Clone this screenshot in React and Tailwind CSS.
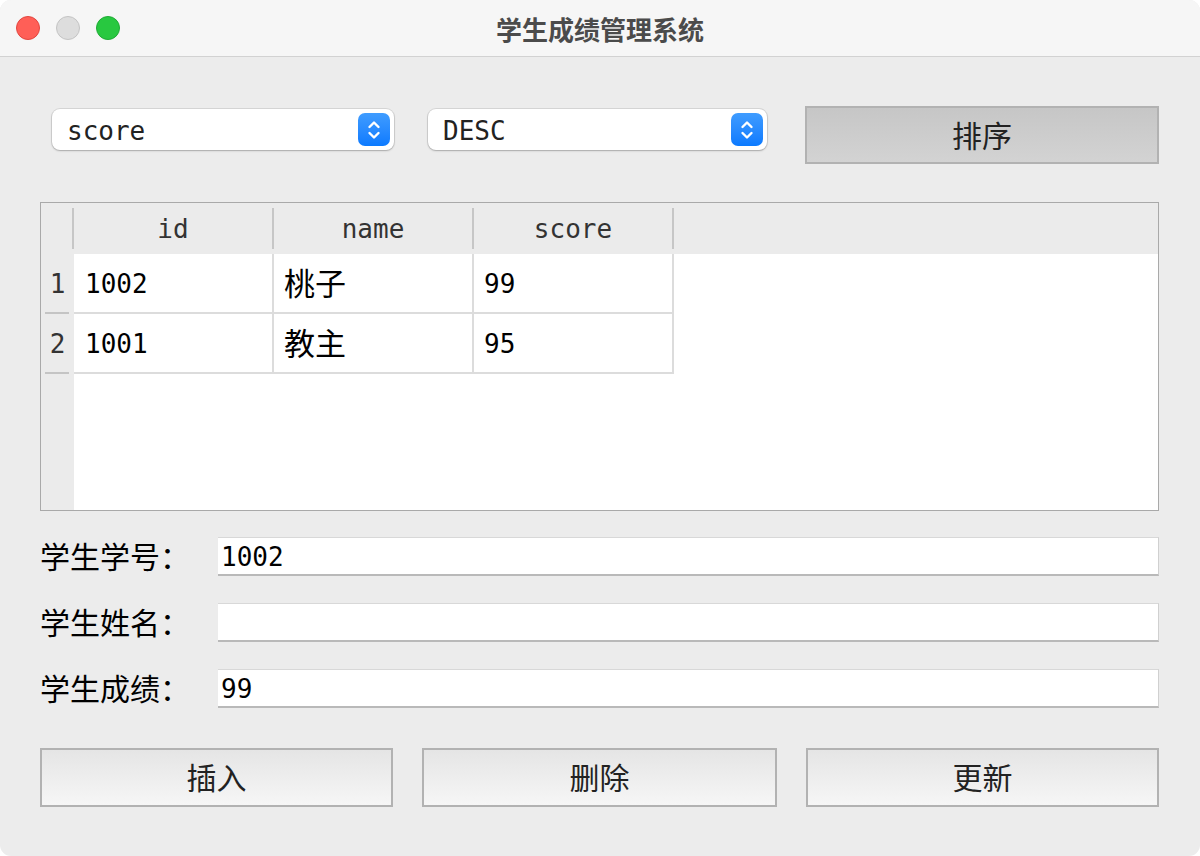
import React from "react";

const mono = { fontFamily: '"DejaVu Sans Mono", "Noto Sans CJK SC", monospace' };
const cjk = { fontFamily: '"Noto Sans CJK SC", "Noto Sans", sans-serif' };

function Stepper() {
  return (
    <div className="w-[32px] h-[33px] rounded-[7px] bg-gradient-to-b from-[#3f9cff] to-[#0a7aff] flex items-center justify-center">
      <svg width="16" height="24" viewBox="0 0 16 24" fill="none" stroke="white" strokeWidth="2.4" strokeLinecap="round" strokeLinejoin="round">
        <path d="M3.5 9 L8 4.5 L12.5 9" />
        <path d="M3.5 15 L8 19.5 L12.5 15" />
      </svg>
    </div>
  );
}

function Select({ value, width }) {
  return (
    <div
      className={`${width} h-[41px] bg-white rounded-[8px] shadow-[0_0_0_1px_rgba(0,0,0,0.09),0_1px_2px_rgba(0,0,0,0.22)] flex items-center justify-between pl-[15px] pr-[4px]`}
    >
      <span className="text-[26px] text-[#222] leading-none pt-[2px]" style={mono}>{value}</span>
      <Stepper />
    </div>
  );
}

function Btn({ label, width }) {
  return (
    <div
      className={`${width} h-[59px] border-2 border-[#b2b2b2] flex items-center justify-center text-[30px] text-[#222] bg-gradient-to-b from-[#e5e5e5] to-[#f6f6f6]`}
      style={cjk}
    >
      <span className="-mt-[2px]">{label}</span>
    </div>
  );
}

const rows = [
  { n: "1", id: "1002", name: "桃子", score: "99" },
  { n: "2", id: "1001", name: "教主", score: "95" },
];

function Table() {
  return (
    <div className="mt-[38px] h-[309px] border border-[#a9a9a9] bg-white flex flex-col">
      {/* header row */}
      <div className="h-[51px] bg-[#ebebeb] flex items-center shrink-0">
        <div className="w-[31px]" />
        <div className="w-[2px] h-[41px] bg-[#c6c6c6]" />
        {["id", "name", "score"].map((h) => (
          <React.Fragment key={h}>
            <div className="w-[198px] text-center text-[26px] text-[#333] leading-none" style={mono}>
              {h}
            </div>
            <div className="w-[2px] h-[41px] bg-[#c6c6c6]" />
          </React.Fragment>
        ))}
      </div>
      <div className="flex-1 flex">
        {/* vertical header */}
        <div className="w-[33px] bg-[#ebebeb] flex flex-col shrink-0">
          {rows.map((r) => (
            <div key={r.n} className="h-[60px] flex flex-col">
              <div className="flex-1 flex items-center justify-center text-[26px] text-[#333] pt-[3px]" style={mono}>
                {r.n}
              </div>
              <div className="h-[2px] ml-[4px] mr-[5px] bg-[#c4c4c4]" />
            </div>
          ))}
        </div>
        <div className="flex-1 flex flex-col">
          {rows.map((r) => (
            <div key={r.n} className="flex h-[60px]">
              <div className="w-[200px] border-r-2 border-b-2 border-[#dcdcdc] flex items-center pl-[11px] pt-[3px] text-[26px] text-black" style={mono}>
                {r.id}
              </div>
              <div className="w-[200px] border-r-2 border-b-2 border-[#dcdcdc] flex items-center pl-[10px] pb-[2px] text-[31px] text-black" style={cjk}>
                {r.name}
              </div>
              <div className="w-[200px] border-r-2 border-b-2 border-[#dcdcdc] flex items-center pl-[10px] pt-[3px] text-[26px] text-black" style={mono}>
                {r.score}
              </div>
            </div>
          ))}
        </div>
      </div>
    </div>
  );
}

function FormRow({ label, value, first }) {
  return (
    <div className={`flex items-center ${first ? "mt-[26px]" : "mt-[27px]"}`}>
      <div className="w-[178px] text-[30px] text-black leading-none -mt-[3px]" style={cjk}>
        {label}
      </div>
      <div className="flex-1 h-[39px] bg-white border-t border-t-[#d8d8d8] border-b-2 border-b-[#b9b9b9] border-r border-r-[#d0d0d0] flex items-center pl-[3px] pt-[2px] text-[26px] text-black" style={mono}>
        {value}
      </div>
    </div>
  );
}

export default function App() {
  return (
    <div className="w-[1200px] h-[856px] bg-white">
      <div className="w-[1200px] h-[856px] rounded-[11px] overflow-hidden bg-[#ececec] flex flex-col">
        {/* title bar */}
        <div className="h-[57px] bg-[#f6f6f6] border-b border-[#d2d2d2] flex items-center shrink-0">
          <div className="flex items-center gap-[16px] pl-[16px]">
            <div className="w-[24px] h-[24px] rounded-full bg-[#ff5f57] border border-[#e2463f]" />
            <div className="w-[24px] h-[24px] rounded-full bg-[#dddddd] border border-[#c4c4c4]" />
            <div className="w-[24px] h-[24px] rounded-full bg-[#28c840] border border-[#1fab35]" />
          </div>
          <div className="flex-1 text-center text-[26px] font-bold text-[#4b4b4b] -ml-[120px]" style={cjk}>
            学生成绩管理系统
          </div>
        </div>

        <div className="pl-[40px] pr-[41px] flex flex-col">
          {/* top row */}
          <div className="mt-[49px] flex items-start">
            <div className="ml-[12px] mt-[3px]">
              <Select value="score" width="w-[342px]" />
            </div>
            <div className="ml-[34px] mt-[3px]">
              <Select value="DESC" width="w-[339px]" />
            </div>
            <div className="ml-[38px] w-[354px] flex">
              <div className="flex-1 h-[58px] border-2 border-[#b2b2b2] bg-gradient-to-b from-[#c6c6c6] to-[#d3d3d3] flex items-center justify-center text-[30px] text-[#222]" style={cjk}>
                <span className="-mt-[2px]">排序</span>
              </div>
            </div>
          </div>

          <Table />

          <FormRow label="学生学号：" value="1002" first />
          <FormRow label="学生姓名：" value="" />
          <FormRow label="学生成绩：" value="99" />

          <div className="mt-[40px] flex gap-[29px]">
            <Btn label="插入" width="w-[353px]" />
            <Btn label="删除" width="w-[355px]" />
            <Btn label="更新" width="w-[353px]" />
          </div>
        </div>
      </div>
    </div>
  );
}
